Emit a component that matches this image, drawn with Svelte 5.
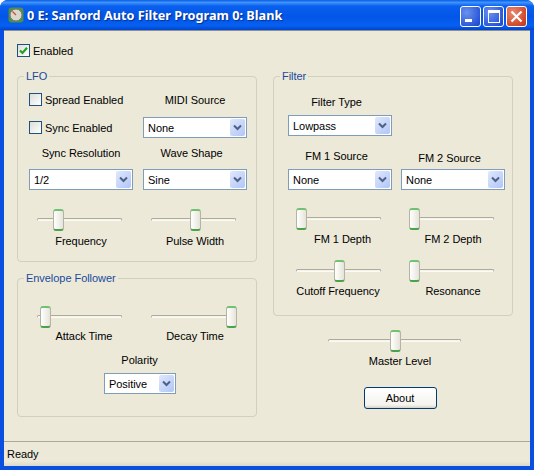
<script>
  let enabled = $state(true);
  let spread = $state(false);
  let sync = $state(false);
</script>

{#snippet combo(value, width)}
  <div class="combo" style="width: {width}px">
    <span class="combo-text">{value}</span>
    <span class="combo-btn">
      <svg width="9" height="7" viewBox="0 0 9 7"><path d="M1 1.5 L4.5 5 L8 1.5" fill="none" stroke="#4d6185" stroke-width="2" /></svg>
    </span>
  </div>
{/snippet}

{#snippet slider(left, width = 85)}
  <div class="slider" style="width: {width}px">
    <div class="track"></div>
    <div class="thumb" style="left: {left}px"></div>
  </div>
{/snippet}

{#snippet check(label, on, toggle)}
  <button class="check" onclick={toggle}>
    <span class="box">
      {#if on}
        <svg width="11" height="11" viewBox="0 0 11 11"><path d="M2 5.5 L4.5 8 L9 2.8" fill="none" stroke="#21a121" stroke-width="2.2" /></svg>
      {/if}
    </span>
    <span>{label}</span>
  </button>
{/snippet}

<div class="window">
  <div class="titlebar">
    <svg class="app-icon" width="16" height="16" viewBox="0 0 16 16">
      <rect x="0.5" y="0.5" width="15" height="15" rx="3" fill="#4f8f4a" />
      <circle cx="8" cy="8" r="6" fill="#d8d8cc" stroke="#77776a" />
      <path d="M4.5 4.5 L8 8" stroke="#d04a3a" stroke-width="1.2" />
    </svg>
    <span class="title">0 E: Sanford Auto Filter Program 0: Blank</span>
    <div class="caption-btns">
      <div class="cap"><span class="min-glyph"></span></div>
      <div class="cap"><span class="max-glyph"></span></div>
      <div class="cap close">
        <svg width="13" height="13" viewBox="0 0 13 13"><path d="M1.5 1.5 L11.5 11.5 M11.5 1.5 L1.5 11.5" stroke="#fff" stroke-width="2.2" /></svg>
      </div>
    </div>
  </div>

  <div class="client">
    <div class="content">
      <div class="enabled-row">
        {@render check("Enabled", enabled, () => (enabled = !enabled))}
      </div>
      <div class="columns">
        <div class="col">
          <fieldset class="lfo">
            <legend>LFO</legend>
            <div class="grid two">
              <div class="checks">
                {@render check("Spread Enabled", spread, () => (spread = !spread))}
                {@render check("Sync Enabled", sync, () => (sync = !sync))}
              </div>
              <div class="field">
                <label class="midi-label">MIDI Source</label>
                {@render combo("None", 104)}
              </div>
              <div class="field lower">
                <label>Sync Resolution</label>
                {@render combo("1/2", 104)}
              </div>
              <div class="field lower">
                <label class="nudge-left">Wave Shape</label>
                {@render combo("Sine", 104)}
              </div>
              <div class="field knob">
                {@render slider(16)}
                <label>Frequency</label>
              </div>
              <div class="field knob">
                {@render slider(39)}
                <label>Pulse Width</label>
              </div>
            </div>
          </fieldset>

          <fieldset class="envelope">
            <legend>Envelope Follower</legend>
            <div class="grid two">
              <div class="field knob">
                {@render slider(3)}
                <label class="attack">Attack Time</label>
              </div>
              <div class="field knob">
                {@render slider(75)}
                <label>Decay Time</label>
              </div>
            </div>
            <div class="field polarity">
              <label>Polarity</label>
              {@render combo("Positive", 72)}
            </div>
          </fieldset>
        </div>

        <div class="col">
          <fieldset class="filter">
            <legend>Filter</legend>
            <div class="grid filter-grid">
              <div class="field filter-type">
                <label class="nudge-left">Filter Type</label>
                {@render combo("Lowpass", 104)}
              </div>
              <div></div>
              <div class="field source">
                <label class="nudge-left">FM 1 Source</label>
                {@render combo("None", 104)}
              </div>
              <div class="field source">
                <label class="nudge-left fm2-source">FM 2 Source</label>
                {@render combo("None", 104)}
              </div>
              <div class="field knob">
                {@render slider(0)}
                <label class="fm1">FM 1 Depth</label>
              </div>
              <div class="field knob">
                {@render slider(0)}
                <label>FM 2 Depth</label>
              </div>
              <div class="field knob row2">
                {@render slider(38)}
                <label class="cutoff">Cutoff Frequency</label>
              </div>
              <div class="field knob row2">
                {@render slider(0)}
                <label>Resonance</label>
              </div>
            </div>
          </fieldset>

          <div class="master">
            {@render slider(62, 133)}
            <label>Master Level</label>
            <button class="about">About</button>
          </div>
        </div>
      </div>
    </div>

    <div class="statusbar">Ready</div>
  </div>
</div>

<style>
  :global(body) {
    margin: 0;
    background: #fff;
  }

  .window {
    width: 534px;
    height: 470px;
    display: flex;
    flex-direction: column;
    box-sizing: border-box;
    background: #0a50e0;
    border-radius: 8px 8px 0 0;
    font-family: "Liberation Sans", Arial, sans-serif;
    font-size: 11px;
    letter-spacing: -0.05px;
    color: #000;
    overflow: hidden;
  }

  .titlebar {
    height: 30px;
    flex: none;
    display: flex;
    align-items: center;
    padding: 0 7px 0 8px;
    box-sizing: border-box;
    background: linear-gradient(180deg, #0a5be6 0%, #3f95fb 8%, #0a60ee 20%, #0355e8 55%, #0660f0 85%, #0045cc 100%);
  }

  .app-icon {
    flex: none;
    margin: -1px 3px 0 0;
  }

  .title {
    color: #fff;
    font-family: "Noto Sans", sans-serif;
    font-weight: 700;
    font-size: 12.7px;
    letter-spacing: 0;
    text-shadow: 1px 1px 1px #0a2f90;
    white-space: nowrap;
    flex: 1;
  }

  .caption-btns {
    display: flex;
    gap: 2px;
    margin-top: 3px;
  }

  .cap {
    width: 21px;
    height: 21px;
    box-sizing: border-box;
    border: 1px solid #fff;
    border-radius: 3px;
    background: radial-gradient(circle at 30% 30%, #6a92ee, #2a55d8 75%, #1f45c0);
    display: flex;
    align-items: center;
    justify-content: center;
    position: relative;
  }

  .close {
    background: radial-gradient(circle at 30% 30%, #e88a70, #d2492a 70%, #b53a1c);
  }

  .min-glyph {
    width: 7px;
    height: 3px;
    background: #fff;
    margin: 8px 5px 0 0;
  }

  .max-glyph {
    width: 10px;
    height: 9px;
    border: 1px solid #fff;
    border-top-width: 3px;
  }

  .client {
    flex: 1;
    margin: 0 4px 4px 4px;
    background: #ece9d8;
    display: flex;
    flex-direction: column;
    border-top: 1px solid #8a8f98;
    min-height: 0;
  }

  .content {
    flex: 1;
    padding: 0 17px 0 13px;
  }

  .enabled-row {
    height: 39px;
    display: flex;
    align-items: flex-start;
    padding: 13px 0 0 0;
    box-sizing: border-box;
  }

  .columns {
    display: grid;
    grid-template-columns: 240px 240px;
    column-gap: 16px;
  }

  .col {
    display: flex;
    flex-direction: column;
  }

  fieldset {
    margin: 0;
    padding: 0 9px 0 11px;
    border: 1px solid #d0d0bf;
    border-radius: 4px;
    box-sizing: border-box;
    min-width: 0;
  }

  legend {
    color: #1a4a9c;
    padding: 0 2px;
    margin-left: -5px;
    line-height: 13px;
  }

  .lfo {
    height: 192px;
  }

  .envelope {
    height: 145px;
    margin-top: 10px;
  }

  .filter {
    height: 246px;
  }

  .grid {
    display: grid;
    column-gap: 10px;
  }

  .two {
    grid-template-columns: 104px 104px;
  }

  .filter-grid {
    grid-template-columns: 104px 104px;
    column-gap: 9px;
    margin-left: 3px;
  }

  .checks {
    display: flex;
    flex-direction: column;
    gap: 15px;
    padding-top: 10px;
  }

  .check {
    display: flex;
    align-items: center;
    gap: 3px;
    padding: 0;
    border: none;
    background: none;
    font: inherit;
    letter-spacing: inherit;
    color: inherit;
    cursor: default;
  }

  .box {
    width: 13px;
    height: 13px;
    box-sizing: border-box;
    border: 1px solid #1c5180;
    background: linear-gradient(135deg, #dcdcd7, #fff);
    display: flex;
    align-items: center;
    justify-content: center;
    flex: none;
  }

  .field {
    display: flex;
    flex-direction: column;
    align-items: center;
    gap: 9px;
    margin-top: 9px;
  }

  .lower {
    margin-top: 8px;
  }

  .field label,
  .master label {
    line-height: 14px;
    white-space: nowrap;
  }

  .midi-label {
    margin-top: 1px;
    margin-bottom: 1px;
  }

  .nudge-left {
    margin-right: 7px;
  }

  .fm2-source {
    margin-top: 2px;
    margin-bottom: -2px;
  }

  .attack {
    margin-left: 6px;
  }

  .fm1 {
    margin-left: 5px;
  }

  .cutoff {
    margin-right: 4px;
  }

  .knob {
    gap: 3px;
    margin-top: 19px;
  }

  .knob .slider {
    margin-right: 4px;
  }

  .envelope .knob {
    gap: 1px;
    margin-top: 21px;
  }

  .filter .knob {
    gap: 2px;
    margin-top: 18px;
  }

  .filter .row2 {
    margin-top: 14px;
  }

  .filter-type {
    margin-top: 12px;
    gap: 6px;
  }

  .source {
    margin-top: 13px;
    gap: 6px;
  }

  .polarity {
    margin: 10px 0 0 3px;
    gap: 6px;
  }

  .polarity .combo {
    margin-left: 1px;
  }

  .combo {
    height: 21px;
    box-sizing: border-box;
    border: 1px solid #7f9db9;
    background: #fff;
    display: flex;
    align-items: center;
    padding: 1px;
  }

  .combo-text {
    flex: 1;
    padding-left: 3px;
  }

  .combo-btn {
    width: 15px;
    height: 17px;
    border-radius: 2px;
    background: linear-gradient(135deg, #dfe8fd, #b1c5f6);
    display: flex;
    align-items: center;
    justify-content: center;
  }

  .slider {
    position: relative;
    height: 22px;
  }

  .track {
    position: absolute;
    left: 0;
    right: 0;
    top: 9px;
    height: 3px;
    border: 1px solid #aeab9b;
    border-bottom-color: #fbfaf4;
    border-radius: 2px;
    box-sizing: border-box;
    background: #f4f3ea;
  }

  .thumb {
    position: absolute;
    top: 0;
    width: 11px;
    height: 22px;
    box-sizing: border-box;
    border: 1px solid #b4b4a6;
    border-top: 2px solid #6fc26f;
    border-bottom: 2px solid #4aa24a;
    border-radius: 3px;
    background: linear-gradient(90deg, #fff, #e6e4d8);
  }

  .master {
    display: flex;
    flex-direction: column;
    align-items: center;
    margin: 14px 0 0 7px;
    gap: 2px;
    width: 240px;
    box-sizing: border-box;
  }

  .master .slider {
    margin-right: 12px;
  }

  .about {
    width: 73px;
    height: 22px;
    margin-top: 17px;
    padding: 0;
    border: 1px solid #003c74;
    border-radius: 3px;
    background: linear-gradient(180deg, #fff, #f4f3ee 85%, #d6d0c5);
    font: inherit;
    letter-spacing: inherit;
    color: #000;
  }

  .statusbar {
    height: 25px;
    flex: none;
    box-sizing: border-box;
    border-top: 1px solid #aca899;
    padding: 5px 0 0 3px;
    line-height: 14px;
    background: linear-gradient(180deg, #ece9d8 80%, #dcd9c8);
  }
</style>
